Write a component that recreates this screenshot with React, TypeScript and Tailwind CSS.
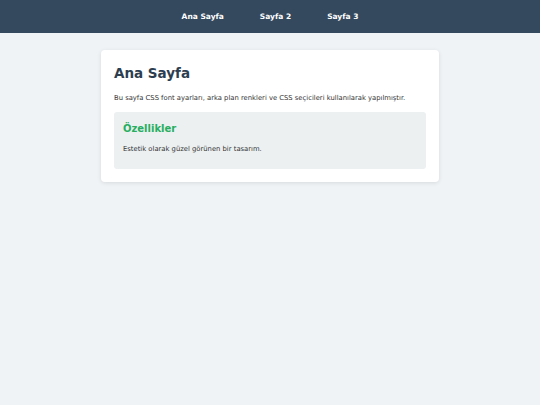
export default function App() {
  const links = ["Ana Sayfa", "Sayfa 2", "Sayfa 3"];
  return (
    <div className="min-h-[405px] bg-[#f0f3f6] font-['DejaVu_Sans',sans-serif] text-[#333]">
      <nav className="flex h-[33px] items-center justify-center gap-[36px] bg-[#34495e]">
        {links.map((l) => (
          <a key={l} href="#" className="text-[7.5px] font-bold text-white">
            {l}
          </a>
        ))}
      </nav>
      <main className="mx-auto mt-[17px] w-[338px] rounded-[4px] bg-white p-[13px] shadow-[0_1px_4px_rgba(0,0,0,0.1)]">
        <h1 className="text-[13.5px] font-bold leading-[20px] text-[#2c3e50]">Ana Sayfa</h1>
        <p className="mt-[10px] text-[6.8px] leading-[10px]">
          Bu sayfa CSS font ayarları, arka plan renkleri ve CSS seçicileri kullanılarak yapılmıştır.
        </p>
        <section className="mt-[9px] rounded-[3px] bg-[#ecf0f1] px-[9px] pb-[15px] pt-[9px]">
          <h2 className="text-[10px] font-bold leading-[16px] text-[#27ae60]">Özellikler</h2>
          <p className="mt-[7px] text-[6.8px] leading-[10px]">Estetik olarak güzel görünen bir tasarım.</p>
        </section>
      </main>
    </div>
  );
}
